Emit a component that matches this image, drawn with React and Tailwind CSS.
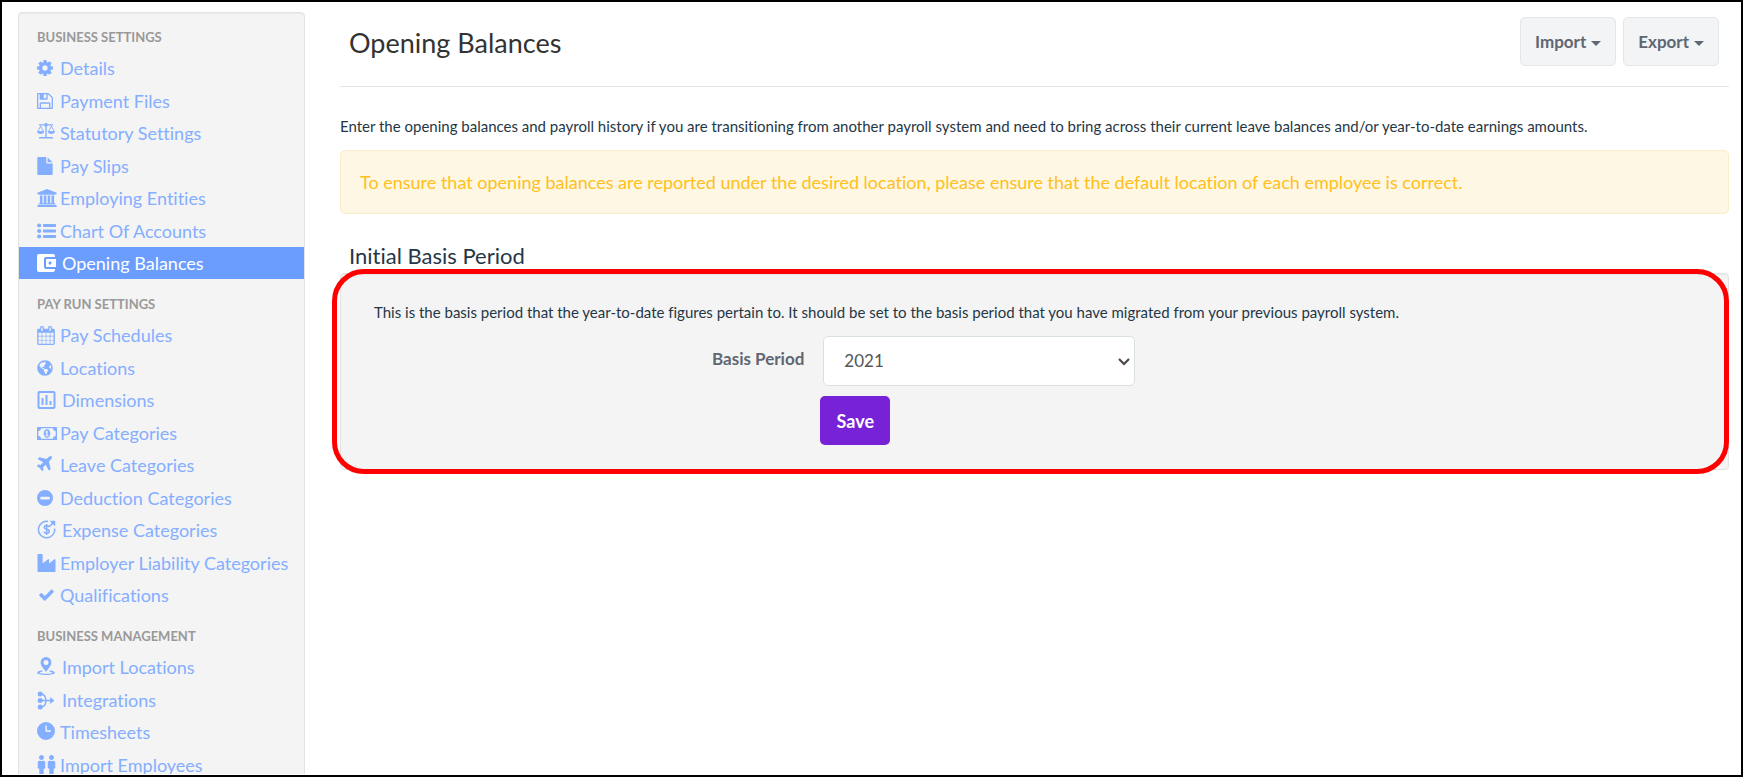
import { FaGlobeAmericas, FaMale } from "react-icons/fa";
import { MdAccountBalanceWallet, MdOutlineAssessment } from "react-icons/md";

function Glyph({ box, className, children }) {
  return (
    <svg viewBox={box} className={className} fill="currentColor" aria-hidden="true">
      {children}
    </svg>
  );
}

const Cog = () => (
  <Glyph box="128 128 1536 1536" className="size-4">
    <path d="M1152 896q0-106-75-181t-181-75-181 75-75 181 75 181 181 75 181-75 75-181zm512-109v222q0 12-8 23t-20 13l-185 28q-19 54-39 91 35 50 107 138 10 12 10 25t-9 23q-27 37-99 108t-94 71q-12 0-26-9l-138-108q-44 23-91 38-16 136-29 186-7 28-36 28h-222q-14 0-24.5-8.5t-11.5-21.5l-28-184q-49-16-90-37l-141 107q-10 9-25 9-14 0-25-11-126-114-165-168-7-10-7-23 0-12 8-23 15-21 51-66.5t54-70.5q-27-50-41-99l-183-27q-13-2-21-12.5t-8-23.5v-222q0-12 8-23t19-13l186-28q14-46 39-92-40-57-107-138-10-12-10-24 0-10 9-23 26-36 98.5-107.5t94.5-71.5q13 0 26 10l138 107q44-23 91-38 16-136 29-186 7-28 36-28h222q14 0 24.5 8.5t11.500 21.5l28 184q49 16 90 37l142-107q9-9 24-9 13 0 25 10 129 119 165 170 7 8 7 22 0 12-8 23-15 21-51 66.5t-54 70.5q26 50 41 98l183 28q13 2 21 12.5t8 23.5z" />
  </Glyph>
);

const Floppy = () => (
  <Glyph box="128 128 1536 1536" className="size-4">
    <path d="M512 1536h768v-384h-768v384zm896 0h128v-896q0-14-10-38.5t-20-34.5l-281-281q-10-10-34-20t-39-10v416q0 40-28 68t-68 28h-576q-40 0-68-28t-28-68v-416h-128v1280h128v-416q0-40 28-68t68-28h832q40 0 68 28t28 68v416zm-384-928v-320q0-13-9.5-22.500t-22.500-9.5h-192q-13 0-22.500 9.5t-9.500 22.500v320q0 13 9.500 22.500t22.500 9.500h192q13 0 22.500-9.500t9.500-22.500zm640 32v928q0 40-28 68t-68 28h-1344q-40 0-68-28t-28-68v-1344q0-40 28-68t68-28h928q40 0 88 20t76 48l280 280q28 28 48 76t20 88z" />
  </Glyph>
);

const Scale = () => (
  <Glyph box="0 0 18 16" className="mb-1 h-4 w-[18px]">
    <path d="M2 1.300h5.300a1.800 1.800 0 0 1 3.400 0H16v1.200h-5.300a1.800 1.800 0 0 1-1 .9V14H16v1.600H2V14h6.300V3.400a1.800 1.800 0 0 1-1-.9H2z" />
    <path d="M3.600 2.300 0 9h7.200zM3.600 4.100 5.900 8.300H1.300zM14.400 2.300 10.800 9H18zM14.400 4.100l2.300 4.200h-4.600z" fillRule="evenodd" />
    <path d="M0 8.600h7.200c0 1.500-1.600 2.300-3.600 2.300S0 10.100 0 8.600zM10.800 8.600H18c0 1.500-1.600 2.300-3.600 2.300s-3.600-.8-3.600-2.300z" />
  </Glyph>
);

const Page = () => (
  <Glyph box="128 0 1536 1792" className="h-[18px] w-4">
    <path d="M1152 512v-472q22 14 36 28l408 408q14 14 28 36h-472zm-128 32q0 40 28 68t68 28h544v1056q0 40-28 68t-68 28h-1344q-40 0-68-28t-28-68v-1600q0-40 28-68t68-28h800v544z" />
  </Glyph>
);

const Bank = () => (
  <Glyph box="0 0 1920 1792" className="h-[18px] w-5">
    <path d="M960 0l960 384v128h-128q0 26-20.500 45t-48.500 19h-1526q-28 0-48.500-19t-20.500-45h-128v-128zm-704 640h256v768h128v-768h256v768h128v-768h256v768h128v-768h256v768h59q28 0 48.500 19t20.500 45v64h-1664v-64q0-26 20.500-45t48.500-19h59v-768zm1595 960q28 0 48.500 19t20.500 45v128h-1920v-128q0-26 20.500-45t48.500-19h1782z" />
  </Glyph>
);

const Bullets = () => (
  <Glyph box="0 0 19 16" className="h-4 w-[19px]">
    <circle cx="2.200" cy="2.500" r="2.100" />
    <circle cx="2.200" cy="8" r="2.100" />
    <circle cx="2.200" cy="13.500" r="2.100" />
    <rect x="6" y="1" width="13" height="3" rx=".4" />
    <rect x="6" y="6.500" width="13" height="3" rx=".4" />
    <rect x="6" y="12" width="13" height="3" rx=".4" />
  </Glyph>
);

const Wallet = () => <MdAccountBalanceWallet viewBox="3 3 19 18" className="h-[18px] w-[19px]" />;

const Calendar = () => (
  <Glyph box="64 0 1664 1792" className="h-[19px] w-[18px]">
    <path d="M192 1664h288v-288h-288v288zm352 0h320v-288h-320v288zm-352-352h288v-320h-288v320zm352 0h320v-320h-320v320zm-352-384h288v-288h-288v288zm736 736h320v-288h-320v288zm-384-736h320v-288h-320v288zm768 736h288v-288h-288v288zm-384-352h320v-320h-320v320zm-352-864v-288q0-13-9.500-22.500t-22.500-9.500h-64q-13 0-22.500 9.500t-9.500 22.500v288q0 13 9.500 22.500t22.500 9.500h64q13 0 22.500-9.500t9.500-22.500zm736 864h288v-320h-288v320zm-384-384h320v-288h-320v288zm384 0h288v-288h-288v288zm32-480v-288q0-13-9.500-22.500t-22.500-9.500h-64q-13 0-22.500 9.500t-9.500 22.500v288q0 13 9.500 22.500t22.500 9.500h64q13 0 22.500-9.500t9.500-22.500zm384-64v1280q0 52-38 90t-90 38h-1408q-52 0-90-38t-38-90v-1280q0-52 38-90t90-38h128v-96q0-66 47-113t113-47h64q66 0 113 47t47 113v96h384v-96q0-66 47-113t113-47h64q66 0 113 47t47 113v96h128q52 0 90 38t38 90z" />
  </Glyph>
);

const Globe = () => <FaGlobeAmericas className="size-4" />;

const Assessment = () => <MdOutlineAssessment viewBox="3 3 18 18" className="h-[18px] w-[19px]" />;

const Banknote = () => (
  <Glyph box="0 0 20 13" className="h-[13px] w-5">
    <path
      fillRule="evenodd"
      d="M.6 0h18.800c.4 0 .6.200.6.600v11.800c0 .4-.2.600-.6.600H.6c-.4 0-.6-.2-.6-.6V.6C0 .2.200 0 .6 0zM4 1.300A2.700 2.700 0 0 1 1.300 4v5A2.700 2.700 0 0 1 4 11.700h12A2.700 2.700 0 0 1 18.700 9V4A2.700 2.700 0 0 1 16 1.300z"
    />
    <path
      fillRule="evenodd"
      d="M10 2.200c2 0 3.300 1.900 3.300 4.300S12 10.800 10 10.800 6.700 8.900 6.700 6.500 8 2.200 10 2.200zM9.700 3.800 8.200 5.100l.6.700.6-.4v2.800h-1v1h3.200v-1h-1V3.800z"
    />
  </Glyph>
);

const Plane = () => (
  <Glyph box="190 128 1408 1408" className="mb-1 size-[15px]">
    <path d="M1568 160q44 52 12 148t-108 172l-161 161 160 696q5 19-12 33l-128 96q-7 6-19 6-4 0-7-1-15-3-21-16l-279-508-259 259 53 194q5 17-8 31l-96 96q-9 9-23 9h-2q-15-2-24-13l-189-252-252-189q-11-7-13-23-1-13 9-25l96-97q9-9 23-9 6 0 8 1l194 53 259-259-508-279q-14-8-17-24-2-16 9-27l128-128q14-13 30-8l665 159 160-160q76-76 172-108t148 12z" />
  </Glyph>
);

const Minus = () => (
  <Glyph box="0 0 16 16" className="size-4">
    <path fillRule="evenodd" d="M8 0a8 8 0 1 1 0 16A8 8 0 0 1 8 0zM4 6.700a.7.700 0 0 0-.7.700v1.300c0 .4.300.7.700.7h8c.4 0 .7-.3.700-.7V7.400a.7.700 0 0 0-.7-.7z" />
  </Glyph>
);

const Expense = () => (
  <svg viewBox="0 0 19 19" className="mb-0.5 size-[19px]" fill="none" stroke="currentColor" strokeWidth="1.500" aria-hidden="true">
    <path d="M11 1.500A8.200 8.200 0 1 0 17.700 8.500" />
    <path d="M12.200 6.800 17.400 1.600" />
    <path d="M13 1h5v5z" fill="currentColor" strokeWidth=".4" />
    <path d="M12 6.900c-.4-.9-1.300-1.300-2.400-1.300-1.400 0-2.300.7-2.300 1.800 0 2.600 5 1.100 5 3.900 0 1.200-1 2-2.600 2-1.400 0-2.400-.6-2.700-1.700M9.600 4v11" />
  </svg>
);

const Factory = () => (
  <Glyph box="0 0 1792 1792" className="h-[18px] w-[19px]">
    <path d="M448 0q26 0 45 19t19 45v891l536-429q17-14 40-14 26 0 45 19t19 45v379l536-429q17-14 40-14 26 0 45 19t19 45v1152q0 26-19 45t-45 19h-1664q-26 0-45-19t-19-45v-1664q0-26 19-45t45-19h384z" />
  </Glyph>
);

const Check = () => (
  <Glyph box="0 310 1792 1212" className="ml-px h-3 w-[17px]">
    <path d="M1671 566q0 40-28 68l-724 724-136 136q-28 28-68 28t-68-28l-136-136-362-362q-28-28-28-68t28-68l136-136q28-28 68-28t68 28l294 295 656-657q28-28 68-28t68 28l136 136q28 28 28 68z" />
  </Glyph>
);

const Pin = () => (
  <Glyph box="0 0 18 18" className="mb-0.5 size-[18px]">
    <path fillRule="evenodd" d="M9 0a5.400 5.400 0 0 1 5.400 5.400C14.400 9 11 11.500 9 15 7 11.500 3.600 9 3.600 5.400A5.400 5.400 0 0 1 9 0zm0 2.900a2.500 2.500 0 1 0 0 5 2.500 2.500 0 0 0 0-5z" />
    <path d="M5.200 13.300C2 13.700.2 14.700.2 15.800.2 17.100 4 18 9 18s8.800-.9 8.800-2.200c0-1.100-1.800-2.100-5-2.500l-.6 1.100c2 .2 3 .6 3.300 1-.6.700-2.900 1.300-6.500 1.300s-5.900-.6-6.500-1.300c.3-.4 1.300-.8 3.300-1z" />
  </Glyph>
);

const Merge = () => (
  <svg viewBox="0 0 18 19" className="h-[19px] w-[18px]" fill="none" stroke="currentColor" strokeWidth="1.500" aria-hidden="true">
    <g fill="currentColor" stroke="none">
      <circle cx="3.200" cy="2.900" r="2.500" />
      <circle cx="3.200" cy="9.500" r="2.500" />
      <circle cx="3.200" cy="16.100" r="2.500" />
    </g>
    <path d="M4 2.900c3.600 0 4.700 2.500 5 6.600-.3 4.100-1.400 6.600-5 6.600M4 9.500h12.500" />
    <path d="M13.300 6.300 17 9.500l-3.700 3.200z" fill="currentColor" strokeWidth=".3" />
  </svg>
);

const Clock = () => (
  <Glyph box="0 0 18 18" className="mb-0.5 size-[18px]">
    <path fillRule="evenodd" d="M9 0a9 9 0 1 1 0 18A9 9 0 0 1 9 0zM8.400 3.600v6.100h5.400V8.300H9.800V3.600z" />
  </Glyph>
);

const People = () => (
  <span className="flex w-[19px] justify-between">
    <FaMale viewBox="0 0 192 512" className="h-5 w-[9px]" />
    <FaMale viewBox="0 0 192 512" className="h-5 w-[9px]" />
  </span>
);

const sections = [
  {
    title: "BUSINESS SETTINGS",
    items: [
      { label: "Details", icon: Cog },
      { label: "Payment Files", icon: Floppy },
      { label: "Statutory Settings", icon: Scale },
      { label: "Pay Slips", icon: Page },
      { label: "Employing Entities", icon: Bank },
      { label: "Chart Of Accounts", icon: Bullets },
      { label: "Opening Balances", icon: Wallet, wide: true, active: true },
    ],
  },
  {
    title: "PAY RUN SETTINGS",
    items: [
      { label: "Pay Schedules", icon: Calendar },
      { label: "Locations", icon: Globe },
      { label: "Dimensions", icon: Assessment, wide: true },
      { label: "Pay Categories", icon: Banknote },
      { label: "Leave Categories", icon: Plane },
      { label: "Deduction Categories", icon: Minus },
      { label: "Expense Categories", icon: Expense, wide: true },
      { label: "Employer Liability Categories", icon: Factory },
      { label: "Qualifications", icon: Check },
    ],
  },
  {
    title: "BUSINESS MANAGEMENT",
    items: [
      { label: "Import Locations", icon: Pin, wide: true },
      { label: "Integrations", icon: Merge, wide: true },
      { label: "Timesheets", icon: Clock },
      { label: "Import Employees", icon: People },
    ],
  },
];

function NavItem({ item }) {
  const Icon = item.icon;
  return (
    <li className="even:mt-px">
      <a
        href="#"
        aria-current={item.active ? "page" : undefined}
        className={
          "flex h-8 items-center whitespace-nowrap pl-[18px] text-lg " +
          (item.active ? "bg-[#6b9dff] text-white" : "text-[#84aeff]")
        }
      >
        <span className={"flex shrink-0 items-center " + (item.wide ? "w-[25px]" : "w-[23px]")}>
          <Icon />
        </span>
        {item.label}
      </a>
    </li>
  );
}

function Sidebar() {
  return (
    <nav className="h-[900px] w-[287px] shrink-0 rounded border border-[#e3e3e3] bg-[#f4f4f4] pt-[9px] shadow-[inset_0_1px_1px_rgba(0,0,0,0.05)]">
      {sections.map((section) => (
        <section key={section.title} className="mb-2.5">
          <h2 className="flex h-[30px] items-center pl-[18px] pt-0.5 text-[13px] font-bold text-[#999999]">{section.title}</h2>
          <ul>
            {section.items.map((item) => (
              <NavItem key={item.label} item={item} />
            ))}
          </ul>
        </section>
      ))}
    </nav>
  );
}

function MenuButton({ children }) {
  return (
    <button
      type="button"
      className="flex h-[49px] items-center gap-[5px] rounded-[5px] border border-[#e3e6eb] bg-[#f3f4f6] px-3.5 text-[17px] font-bold text-[#5e6772]"
    >
      {children}
      <svg viewBox="0 0 10 5" className="mt-1 h-[5px] w-2.5" fill="currentColor" aria-hidden="true">
        <path d="M0 0h10L5 5z" />
      </svg>
    </button>
  );
}

export default function App() {
  return (
    <div className="h-screen overflow-hidden border-2 border-black bg-white font-['Lato','Liberation_Sans',sans-serif] [font-variant-ligatures:none]">
      <div className="flex h-full gap-[35px] overflow-hidden pl-4 pr-3">
        <div className="mb-px shrink-0 overflow-hidden pt-2.5">
          <Sidebar />
        </div>
        <main className="min-w-0 flex-1">
          <header className="flex h-[85px] justify-between border-b border-[#e3e5e8] pl-[9px] pr-2.5 pt-[15px]">
            <h1 className="h-[49px] text-[27px] leading-[52px] text-[#333333]">Opening Balances</h1>
            <div className="flex gap-[7px]">
              <MenuButton>Import</MenuButton>
              <MenuButton>Export</MenuButton>
            </div>
          </header>
          <p className="mt-[29px] text-[15px] leading-5 text-[#253746]">
            Enter the opening balances and payroll history if you are transitioning from another payroll system and need
            to bring across their current leave balances and/or year-to-date earnings amounts.
          </p>
          <div
            role="alert"
            className="mt-3.5 rounded-[5px] border border-[#fbeccb] bg-[#fef7e3] px-[19px] py-[18px] text-lg leading-[26px] text-[#ffc020]"
          >
            To ensure that opening balances are reported under the desired location, please ensure that the default
            location of each employee is correct.
          </div>
          <h2 className="mt-[26px] pl-[9px] text-[22px] leading-[32px] text-[#253746]">Initial Basis Period</h2>
          <form className="relative mt-px rounded border border-[#e3e3e3] bg-[#f4f4f4] px-[33px] pb-6 pt-7 shadow-[inset_0_1px_1px_rgba(0,0,0,0.05)]">
            <p className="text-[15px] leading-5 text-[#253746]">
              This is the basis period that the year-to-date figures pertain to. It should be set to the basis period
              that you have migrated from your previous payroll system.
            </p>
            <div className="mt-3.5 flex">
              <label htmlFor="basis" className="w-1/3 pr-2.5 pt-[11px] text-right text-[17px] leading-6 font-bold text-[#5e6772]">
                Basis Period
              </label>
              <div className="relative ml-[9px] w-[312px]">
                <select
                  id="basis"
                  defaultValue="2021"
                  className="h-[50px] w-full appearance-none rounded-[5px] border border-[#d9e0e4] bg-white pl-5 pr-8 text-[17px] text-[#555555]"
                >
                  <option>2021</option>
                </select>
                <svg
                  viewBox="0 0 12 8"
                  className="pointer-events-none absolute right-[5px] top-[22px] h-2 w-3"
                  fill="none"
                  stroke="#484848"
                  strokeWidth="2.200"
                  aria-hidden="true"
                >
                  <path d="M1 1l5 5 5-5" />
                </svg>
              </div>
            </div>
            <div className="mt-2.5 flex">
              <div className="w-1/3" />
              <button type="submit" className="ml-1.5 h-[49px] w-[70px] rounded-[5px] bg-[#7722d7] text-lg font-bold text-white">
                Save
              </button>
            </div>
            <div className="pointer-events-none absolute -bottom-[5px] -left-[9px] -right-px -top-[5px] rounded-[32px] border-[5px] border-[#ff0000]" />
          </form>
        </main>
      </div>
    </div>
  );
}
